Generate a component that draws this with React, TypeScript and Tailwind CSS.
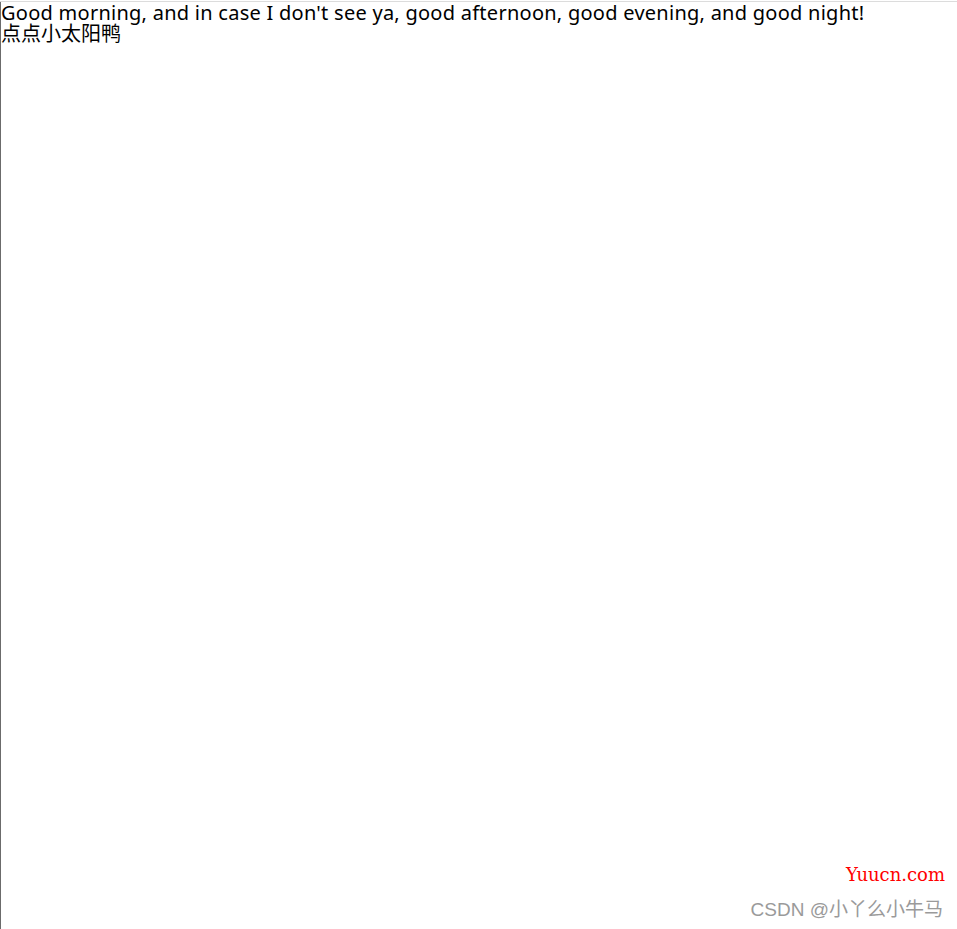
export default function App() {
  return (
    <div className="h-[929px] w-[957px] bg-white pt-px overflow-hidden">
      <div className="flex h-full flex-col border-t border-[#dcdcdc]">
        <div className="flex flex-1 flex-col border-l border-[#6b6b6b]">
          {/* Greeting text */}
          <div
            className="text-[20px] leading-[21px] text-black"
            style={{ fontFamily: '"Noto Sans", "Noto Sans CJK SC", sans-serif' }}
          >
            <p className="tracking-[0.26px] whitespace-nowrap">Good morning, and in case I don't see ya, good afternoon, good evening, and good night!</p>
            <p>点点小太阳鸭</p>
          </div>

          {/* Watermark */}
          <div className="mt-auto flex flex-col items-end pb-[8px] pr-[12px]">
            <span
              className="text-[18px] font-medium leading-[20px] text-[#ff0000]"
              style={{ fontFamily: '"DejaVu Serif", serif' }}
            >
              Yuucn.com
            </span>
            <span
              className="mt-[14px] pr-[2px] text-[19px] leading-[22px] text-[#9a9a9a]"
              style={{ fontFamily: '"Liberation Sans", "Noto Sans CJK SC", sans-serif' }}
            >
              CSDN @小丫么小牛马
            </span>
          </div>
        </div>
      </div>
    </div>
  );
}
